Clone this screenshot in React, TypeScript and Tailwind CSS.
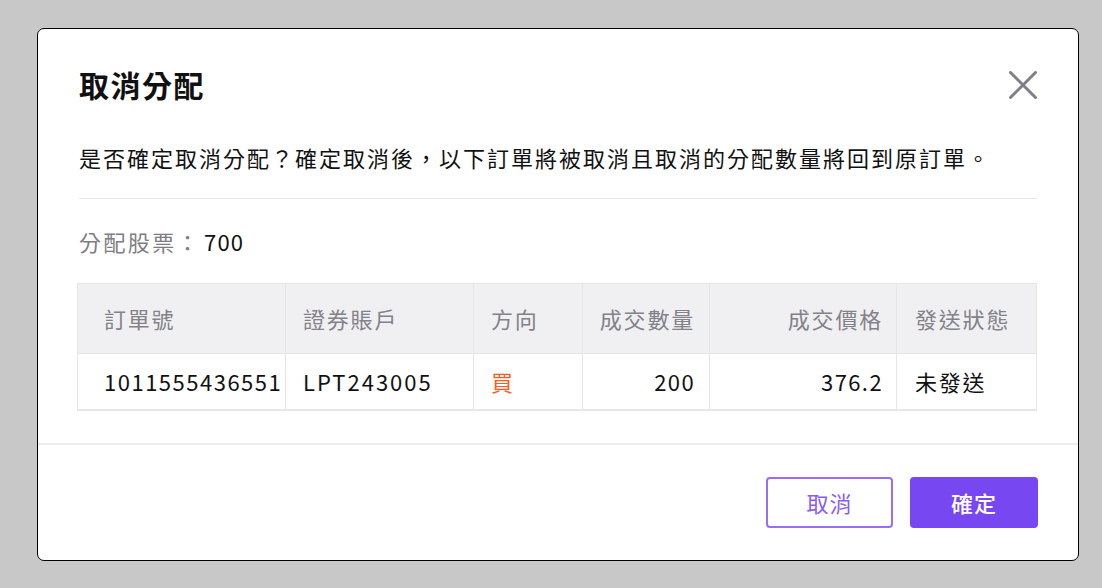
import React from 'react';

const font = { fontFamily: '"Noto Sans CJK TC", "Noto Sans", sans-serif' };

const columns = [
    { key: 'order', label: '訂單號', width: 'w-[208px]', align: 'text-left', pad: 'pl-[26px] pr-0' },
    { key: 'account', label: '證券賬戶', width: 'w-[188px]', align: 'text-left', pad: 'pl-[17px] pr-2' },
    { key: 'side', label: '方向', width: 'w-[109px]', align: 'text-left', pad: 'pl-[17px] pr-2' },
    { key: 'qty', label: '成交數量', width: 'w-[127px]', align: 'text-right', pad: 'pr-[14px] pl-2' },
    { key: 'price', label: '成交價格', width: 'w-[187px]', align: 'text-right', pad: 'pr-[13px] pl-2' },
    { key: 'status', label: '發送狀態', width: 'flex-1', align: 'text-left', pad: 'pl-[18px] pr-2' },
];

const row: Record<string, React.ReactNode> = {
    order: <span className="tracking-[1.5px]">1011555436551</span>,
    account: <span className="tracking-[2px]">LPT243005</span>,
    side: <span className="text-[#ff5a1e]">買</span>,
    qty: <span className="tracking-[1.4px]">200</span>,
    price: <span className="tracking-[1.4px]">376.2</span>,
    status: '未發送',
};

const CancelAllocationDialog = () => {
    return (
        <div className="w-[1102px] h-[588px] bg-[#c8c8c8] pt-[28px] pl-[37px]" style={font}>
            <div className="w-[1042px] h-[533px] bg-white border border-black rounded-[7px] flex flex-col">
                <div className="px-[41px] pt-[35px]">
                    {/* Header */}
                    <div className="flex items-center justify-between h-10">
                        <h2 className="text-[30px] font-bold text-[#111] leading-10 tracking-[1.5px]">取消分配</h2>
                        <button className="w-7 h-7 mt-[1px]">
                            <svg viewBox="0 0 28 28" className="w-7 h-7">
                                <path
                                    d="M1.5 1.5 L26.5 26.5 M26.5 1.5 L1.5 26.5"
                                    stroke="#807f88"
                                    strokeWidth="3"
                                    strokeLinecap="round"
                                />
                            </svg>
                        </button>
                    </div>

                    <p className="mt-[39px] text-[22px] leading-7 tracking-[2px] text-[#111] whitespace-nowrap">
                        是否確定取消分配？確定取消後，以下訂單將被取消且取消的分配數量將回到原訂單。
                    </p>
                    <div className="mt-[27px] h-px bg-[#e8e8e8]" />

                    <div className="mt-[28px] text-[22px] leading-7">
                        <span className="text-[#7d7d82] tracking-[2.4px]">分配股票：</span>
                        <span className="text-[#111] tracking-[1.2px] ml-[3px]">700</span>
                    </div>

                    {/* Table */}
                    <div className="mt-[28px] w-[960px] -ml-[2px] border border-[#e6e6e8] border-b-2 text-[22px] tracking-[1.8px]">
                        <div className="flex h-[69px] bg-[#f0f0f2]">
                            {columns.map((col, i) => (
                                <div
                                    key={col.key}
                                    className={`${col.width} ${col.align} ${col.pad} flex items-center ${
                                        col.align === 'text-right' ? 'justify-end' : ''
                                    } ${i < columns.length - 1 ? 'border-r border-[#e6e6e8]' : ''} text-[#828288]`}
                                >
                                    {col.label}
                                </div>
                            ))}
                        </div>
                        <div className="flex h-[56px] border-t border-[#e6e6e8]">
                            {columns.map((col, i) => (
                                <div
                                    key={col.key}
                                    className={`${col.width} ${col.align} ${col.pad} flex items-center ${
                                        col.align === 'text-right' ? 'justify-end' : ''
                                    } ${i < columns.length - 1 ? 'border-r border-[#e6e6e8]' : ''} text-[#111] whitespace-nowrap`}
                                >
                                    {row[col.key]}
                                </div>
                            ))}
                        </div>
                    </div>
                </div>

                <div className="mt-[32px] h-[2px] bg-[#ececec]" />

                {/* Footer */}
                <div className="flex justify-end gap-[17px] pt-[32px] pr-[40px]">
                    <button className="w-[127px] h-[51px] rounded-[4px] border-2 border-[#9b6cf6] text-[#8a5cf2] text-[22px] tracking-[1px] bg-white">
                        取消
                    </button>
                    <button className="w-[128px] h-[51px] rounded-[4px] bg-[#7747f2] text-white text-[22px] tracking-[1px] font-medium">
                        確定
                    </button>
                </div>
            </div>
        </div>
    );
};

export default function App() {
    return <CancelAllocationDialog />;
}
